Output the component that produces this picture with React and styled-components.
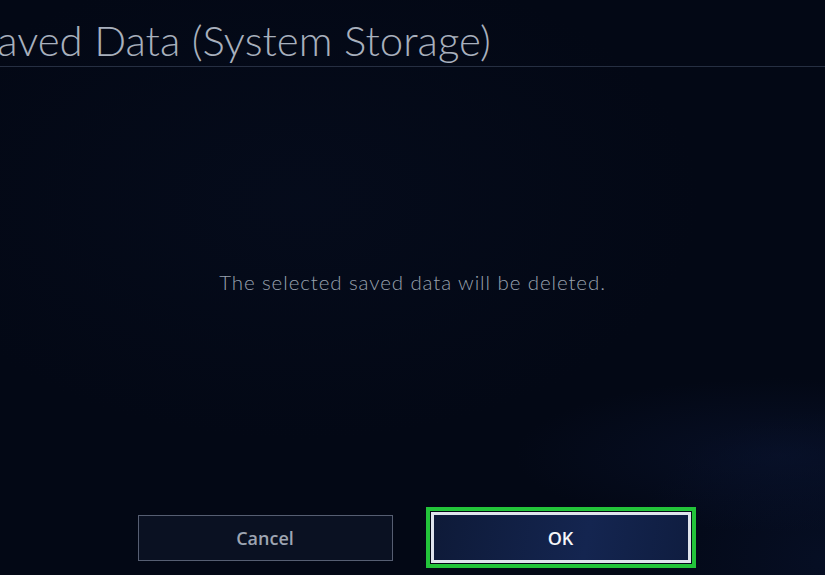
import React from "react";
import styled, { createGlobalStyle } from "styled-components";

const Global = createGlobalStyle`
  html, body {
    margin: 0;
    padding: 0;
    background: #030815;
  }
  #root {
    height: 575px;
  }
`;

const Screen = styled.div`
  width: 825px;
  height: 575px;
  overflow: hidden;
  display: flex;
  flex-direction: column;
  font-family: "Open Sans", "Liberation Sans", sans-serif;
  background:
    radial-gradient(ellipse 380px 110px at 780px 455px, rgba(12, 24, 58, 0.45), transparent 70%),
    radial-gradient(ellipse 260px 200px at 825px 560px, rgba(10, 22, 54, 0.45), transparent 75%),
    radial-gradient(ellipse 500px 300px at 300px 200px, rgba(8, 16, 36, 0.4), transparent 80%),
    #030815;
`;

const Header = styled.header`
  height: 66px;
  border-bottom: 1px solid #262f42;
  display: flex;
  align-items: flex-end;
  overflow: hidden;
`;

const Title = styled.h1`
  margin: 0 0 5px -25px;
  font-family: "Lato", "Open Sans", sans-serif;
  font-size: 42px;
  font-weight: 300;
  line-height: 1;
  color: #a8b0bd;
  white-space: nowrap;
`;

const Body = styled.main`
  flex: 1;
  display: flex;
  flex-direction: column;
  align-items: center;
`;

const Message = styled.p`
  margin: 203px 0 0;
  font-family: "Lato", "Open Sans", sans-serif;
  font-size: 20.5px;
  font-weight: 300;
  letter-spacing: 0.9px;
  color: #98a1ae;
`;

const Actions = styled.div`
  margin-top: auto;
  margin-bottom: 12px;
  display: flex;
  align-items: center;
  gap: 33px;
  padding-left: 8px;
`;

const Button = styled.button`
  box-sizing: border-box;
  width: 255px;
  height: 46px;
  font-family: "Open Sans", "Liberation Sans", sans-serif;
  font-size: 18px;
  font-weight: 600;
  color: #9ea5b2;
  background: #0a1122;
  border: 1px solid #565e72;
  cursor: pointer;
`;

const FocusButton = styled(Button)`
  width: 260px;
  height: 51px;
  margin: 0 5px;
  color: #f4f6fa;
  background: linear-gradient(100deg, #0e1a38, #142550 60%, #0f1d40);
  border: 3px solid #dfe4ec;
  outline: 4px solid #23c43a;
  outline-offset: 1px;
`;

export default function App() {
  return (
    <>
      <Global />
      <Screen>
        <Header>
          <Title>Saved Data (System Storage)</Title>
        </Header>
        <Body>
          <Message>The selected saved data will be deleted.</Message>
          <Actions>
            <Button>Cancel</Button>
            <FocusButton>OK</FocusButton>
          </Actions>
        </Body>
      </Screen>
    </>
  );
}
